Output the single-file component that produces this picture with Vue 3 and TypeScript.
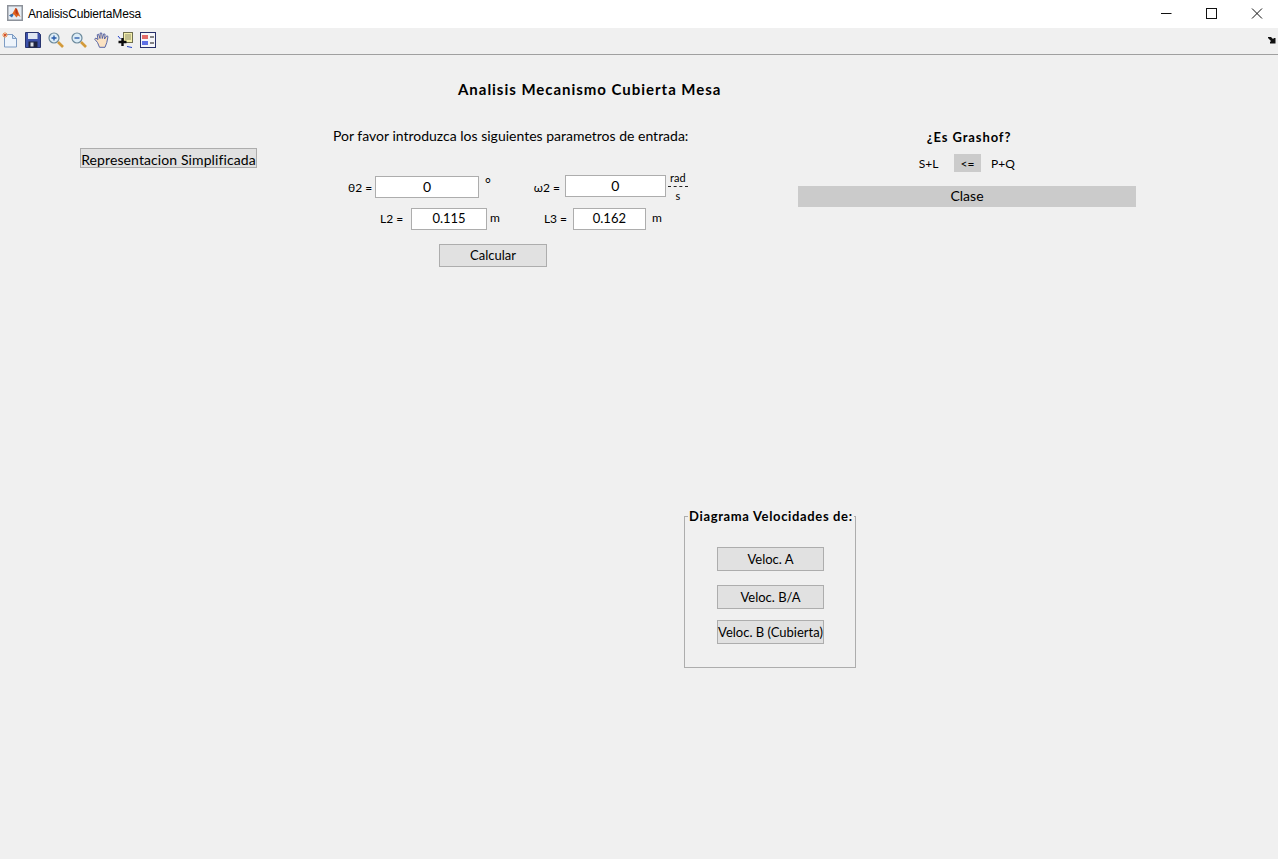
<script setup lang="ts">
const buttons = [
  { label: 'Veloc. A', cls: 'v1' },
  { label: 'Veloc. B/A', cls: 'v2' },
  { label: 'Veloc. B (Cubierta)', cls: 'v3' },
]
</script>

<template>
  <div class="window">
    <header class="titlebar">
      <svg class="appicon" width="16" height="16" viewBox="0 0 16 16">
        <rect x="0.75" y="0.75" width="14.5" height="14.5" fill="#e6edf4" stroke="#8d929a" stroke-width="1.5" />
        <path d="M2 10.5l3.5-2 3-5.5 1.500 1 3.500 8-2.500-1.500-1.500 2-2.500-3z" fill="#e0641e" />
        <path d="M2 10.5l3.5-2 1 1.500-1.500 2.500z" fill="#2f6fb0" />
        <path d="M8.500 3l1.500 1 1 6-2.500-2z" fill="#b5341a" />
      </svg>
      <span class="apptitle">AnalisisCubiertaMesa</span>
      <div class="wincontrols">
        <svg width="12" height="12" viewBox="0 0 12 12"><path d="M0 5.500h10.500" stroke="#111" fill="none" /></svg>
        <svg width="12" height="12" viewBox="0 0 12 12"><rect x="0.500" y="0.500" width="10" height="10" stroke="#111" fill="none" /></svg>
        <svg width="12" height="12" viewBox="0 0 12 12"><path d="M1 0.500l10 10M11 0.500l-10 10" stroke="#111" fill="none" /></svg>
      </div>
    </header>
    <nav class="toolbar">
      <svg width="16" height="16" viewBox="0 0 16 16">
        <path d="M2.500 2.500h8l4 4v8.500h-12z" fill="#eef4fb" stroke="#7d9cc4" />
        <path d="M10.500 2.500v4h4z" fill="#cfe0f2" stroke="#7d9cc4" />
        <path d="M3 0v6M0 3h6M1 1l4 4M5 1l-4 4" stroke="#ef9a5a" />
        <circle cx="3" cy="3" r="1.300" fill="#d8502a" />
      </svg>
      <svg width="16" height="16" viewBox="0 0 16 16">
        <path d="M0.500 0.500h13l2 2v13h-15z" fill="#3c50a8" stroke="#28346e" />
        <rect x="3" y="1" width="9.500" height="6" fill="#dfe6f2" />
        <rect x="3.500" y="9.500" width="9" height="6" fill="#1f2440" />
        <rect x="5.500" y="10.500" width="3" height="4" fill="#d8dce4" />
      </svg>
      <svg width="16" height="16" viewBox="0 0 16 16">
        <circle cx="6" cy="6" r="5" fill="#dcecf6" stroke="#6c8a9c" stroke-width="1.200" />
        <path d="M3.500 6h5M6 3.500v5" stroke="#2456a8" stroke-width="1.300" />
        <path d="M10 10l5 5" stroke="#d39a3a" stroke-width="2.600" />
      </svg>
      <svg width="16" height="16" viewBox="0 0 16 16">
        <circle cx="6" cy="6" r="5" fill="#dcecf6" stroke="#6c8a9c" stroke-width="1.200" />
        <path d="M3.500 6h5" stroke="#2456a8" stroke-width="1.300" />
        <path d="M10 10l5 5" stroke="#d39a3a" stroke-width="2.600" />
      </svg>
      <svg width="16" height="16" viewBox="0 0 16 16">
        <path d="M3.500 10.500L0.700 7.200l1-1.200L4 7.500 3.200 2.800l1.300-.6L6 6.500 6.200 1h1.500l.6 5.500L9.800 1.800l1.300.5L10.500 7 12.800 3.800l1.200.7L12.800 10.500 11 15.300H5.500z" fill="#fbe2c2" stroke="#4758a0" stroke-width="0.900" stroke-linejoin="round" />
      </svg>
      <svg width="16" height="16" viewBox="0 0 16 16">
        <rect x="6.500" y="0.500" width="9" height="10" fill="#f3eeaa" stroke="#6f6f50" />
        <path d="M8 3h6M8 5h6M8 7h6" stroke="#8f8f70" />
        <path d="M5.500 6v8M1.500 10h8" stroke="#0c0c0c" stroke-width="2.400" />
        <path d="M1 4l2.500 3M10 14.500l5 1" stroke="#2040c8" />
      </svg>
      <svg width="16" height="16" viewBox="0 0 16 16">
        <rect x="0.500" y="0.500" width="15" height="15" fill="#f6f6fa" stroke="#27306a" />
        <rect x="2" y="3" width="6" height="4" fill="#e26a6a" />
        <rect x="2" y="9" width="6" height="4" fill="#5f70e4" />
        <path d="M10 5h4M10 11h4" stroke="#111" />
      </svg>
      <span class="overflow">
        <svg width="8" height="7" viewBox="0 0 8 7"><path d="M0 0h3l2 2 1-1 1.500 0V6.500H2V5l1-1-3-3z" fill="#111" /></svg>
      </span>
    </nav>
    <main class="canvas">
      <h1 class="heading">Analisis Mecanismo Cubierta Mesa</h1>
      <div class="panels">
        <button class="btn simp">Representacion Simplificada</button>
        <section class="inputs">
          <p class="prompt">Por favor introduzca los siguientes parametros de entrada:</p>
          <div class="row row1">
            <label class="lab l1">θ2 =</label>
            <div class="field f1">0</div>
            <span class="unit deg">°</span>
            <label class="lab l2">ω2 =</label>
            <div class="field f2">0</div>
            <div class="frac"><span class="num">rad</span><i></i><span class="den">s</span></div>
          </div>
          <div class="row row2">
            <label class="lab l3">L2 =</label>
            <div class="field f3">0.115</div>
            <span class="unit u3">m</span>
            <label class="lab l4">L3 =</label>
            <div class="field f4">0.162</div>
            <span class="unit u4">m</span>
          </div>
          <button class="btn calc">Calcular</button>
        </section>
        <section class="grashof">
          <h2>¿Es Grashof?</h2>
          <div class="cmp">
            <span class="sl">S+L</span>
            <span class="le">&lt;=</span>
            <span class="pq">P+Q</span>
          </div>
          <div class="clase">Clase</div>
        </section>
      </div>
      <fieldset class="group">
        <legend>Diagrama Velocidades de:</legend>
        <button v-for="b in buttons" :key="b.label" class="btn vel" :class="b.cls">{{ b.label }}</button>
      </fieldset>
    </main>
  </div>
</template>

<style>
html, body { margin: 0; background: #f0f0f0; }
</style>

<style scoped>
.window {
  width: 1278px;
  height: 859px;
  overflow: hidden;
  background: #f0f0f0;
  color: #000;
  font-family: "Lato", "Noto Sans", sans-serif;
  font-size: 13px;
  display: flex;
  flex-direction: column;
}
.titlebar {
  height: 28px;
  background: #fff;
  display: flex;
  align-items: center;
  padding-left: 7px;
  box-sizing: border-box;
}
.appicon { margin-bottom: 2px; }
.apptitle {
  margin-left: 5px;
  font-family: "Liberation Sans", sans-serif;
  font-size: 12px;
  letter-spacing: -0.15px;
}
.wincontrols {
  margin-left: auto;
  display: flex;
  gap: 33px;
  padding-right: 15px;
}
.toolbar {
  height: 27px;
  box-sizing: border-box;
  background: #f0f0f0;
  border-bottom: 1px solid #a0a0a0;
  display: flex;
  align-items: center;
  gap: 7px;
  padding: 0 2px 3px 2px;
}
.overflow { margin-left: auto; display: flex; padding-top: 2px; }
.canvas { flex: 1; }
.heading {
  margin: 26px 0 0 458px;
  font-size: 15px;
  line-height: 17px;
  font-weight: 700;
  letter-spacing: 0.97px;
  white-space: nowrap;
}
.panels { display: flex; align-items: flex-start; height: 410px; }
.btn {
  box-sizing: border-box;
  display: block;
  background: #e1e1e1;
  border: 1px solid #adadad;
  padding: 0;
  font: inherit;
  color: #000;
  text-align: center;
  white-space: nowrap;
}
.simp {
  margin: 50px 0 0 80px;
  width: 177px;
  height: 20px;
  padding-top: 2px;
  font-size: 14px;
  letter-spacing: 0.1px;
}
.inputs { margin-left: 76px; width: 465px; padding-top: 30px; }
.prompt { margin: 0; line-height: 16px; font-size: 14px; white-space: nowrap; }
.row { display: flex; align-items: center; font-size: 12px; }
.row1 { height: 26px; margin-top: 30px; }
.row2 { height: 24px; margin-top: 7px; }
.field {
  box-sizing: border-box;
  background: #fff;
  border: 1px solid #adadad;
  text-align: center;
  font-size: 14px;
  height: 22px;
  line-height: 20px;
}
.f3, .f4 { font-size: 13px; line-height: 18px; }
.lab { white-space: nowrap; }
.l1 { margin-left: 15px; width: 27px; }
.f1 { width: 104px; }
.deg { margin-left: 6px; margin-bottom: 10px; font-size: 14px; }
.l2 { margin-left: 43px; width: 31px; }
.f2 { width: 101px; margin-bottom: 2px; }
.frac {
  display: flex;
  flex-direction: column;
  align-items: center;
  width: 20px;
  margin-left: 2px;
  font-size: 11px;
}
.num { line-height: 16px; }
.den { line-height: 18px; }
.frac i { display: block; width: 20px; border-top: 1px dashed #222; }
.l3 { margin-left: 47px; width: 31px; margin-bottom: 2px; }
.f3 { width: 76px; }
.u3 { margin-left: 3px; margin-bottom: 3px; }
.l4 { margin-left: 44px; width: 29px; margin-bottom: 2px; }
.f4 { width: 73px; }
.u4 { margin-left: 6px; margin-bottom: 3px; }
.calc { margin: 13px 0 0 106px; width: 108px; height: 23px; padding-bottom: 2px; }
.grashof { width: 338px; padding-top: 31px; text-align: center; }
.grashof h2 { margin: 0; padding-left: 4px; font-size: 13px; line-height: 16px; font-weight: 700; letter-spacing: 0.9px; white-space: nowrap; }
.cmp { display: flex; height: 18px; margin-top: 9px; line-height: 20px; font-size: 12px; }
.sl { margin-left: 120px; width: 21px; }
.le { margin-left: 15px; width: 27px; background: #cbcbcb; line-height: 20px; }
.pq { margin-left: 10px; }
.clase { margin-top: 14px; height: 21px; line-height: 19px; background: #cbcbcb; font-size: 14px; }
.group {
  box-sizing: border-box;
  margin: 0 0 0 684px;
  padding: 0;
  width: 172px;
  height: 160px;
  border: 1px solid #adadad;
}
.group legend {
  padding: 0 1px;
  margin-left: 3px;
  font-size: 13px;
  font-weight: 700;
  line-height: 16px;
  letter-spacing: 0.65px;
  white-space: nowrap;
}
.vel { width: 107px; height: 24px; margin-left: 32px; font-size: 13px; }
.v1 { margin-top: 23px; }
.v2 { margin-top: 14px; }
.v3 { margin-top: 11px; }
</style>
